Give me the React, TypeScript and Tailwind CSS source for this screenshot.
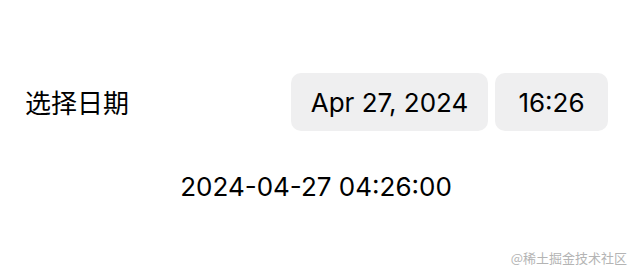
export default function App() {
  return (
    <div className="flex h-[272px] w-full flex-col bg-white text-black">
      <div className="mt-[73px] flex h-[58px] items-center justify-between pl-[25px] pr-[24px] font-['Inter','Noto_Sans_CJK_SC',sans-serif]">
        <span className="font-['Noto_Sans_CJK_SC',sans-serif] text-[26px] leading-none">
          选择日期
        </span>
        <div className="flex h-full gap-[7px]">
          <button
            type="button"
            className="flex h-full w-[197px] items-center justify-center rounded-[10px] bg-[#efeff0] text-[26px]"
          >
            Apr 27, 2024
          </button>
          <button
            type="button"
            className="flex h-full w-[113px] items-center justify-center rounded-[10px] bg-[#efeff0] text-[26px]"
          >
            16:26
          </button>
        </div>
      </div>
      <p className="mt-[38px] text-center font-['Inter',sans-serif] text-[26px] leading-[36px]">
        2024-04-27 04:26:00
      </p>
      <div className="mt-auto flex justify-end pb-[8px] pr-[5px]">
        <span className="font-['Noto_Sans_CJK_SC',sans-serif] text-[13px] leading-none text-[#b4b4b4]">
          @稀土掘金技术社区
        </span>
      </div>
    </div>
  );
}
